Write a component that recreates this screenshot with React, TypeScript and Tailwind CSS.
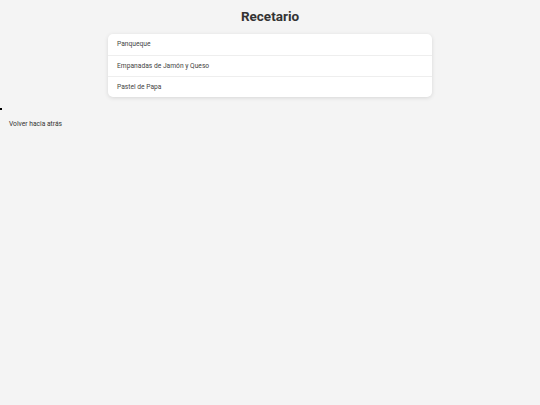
export default function App() {
  const recetas = ['Panqueque', 'Empanadas de Jamón y Queso', 'Pastel de Papa'];

  return (
    <div className="min-h-[405px] w-full bg-[#f4f4f4] text-[#333] font-['Roboto',sans-serif]">
      <h1 className="pt-[7px] text-center text-[13.5px] leading-[18px] font-bold text-[#333]">Recetario</h1>

      {/* Lista de recetas */}
      <div className="mx-auto mt-[9px] w-[324px] overflow-hidden rounded-[5px] bg-white shadow-[0_1px_4px_rgba(0,0,0,0.12)]">
        {recetas.map((r, i) => (
          <div
            key={r}
            className={`flex h-[21px] items-center px-[9px] text-[6.7px] text-[#444] ${i > 0 ? 'border-t border-[#eee]' : ''}`}
          >
            {r}
          </div>
        ))}
      </div>

      <div className="mt-[11px] h-[2px] w-[2px] bg-black" />
      <div className="mt-[10px] pl-[9px] text-[6.7px] leading-[9px] text-[#333]">Volver hacia atrás</div>
    </div>
  );
}
